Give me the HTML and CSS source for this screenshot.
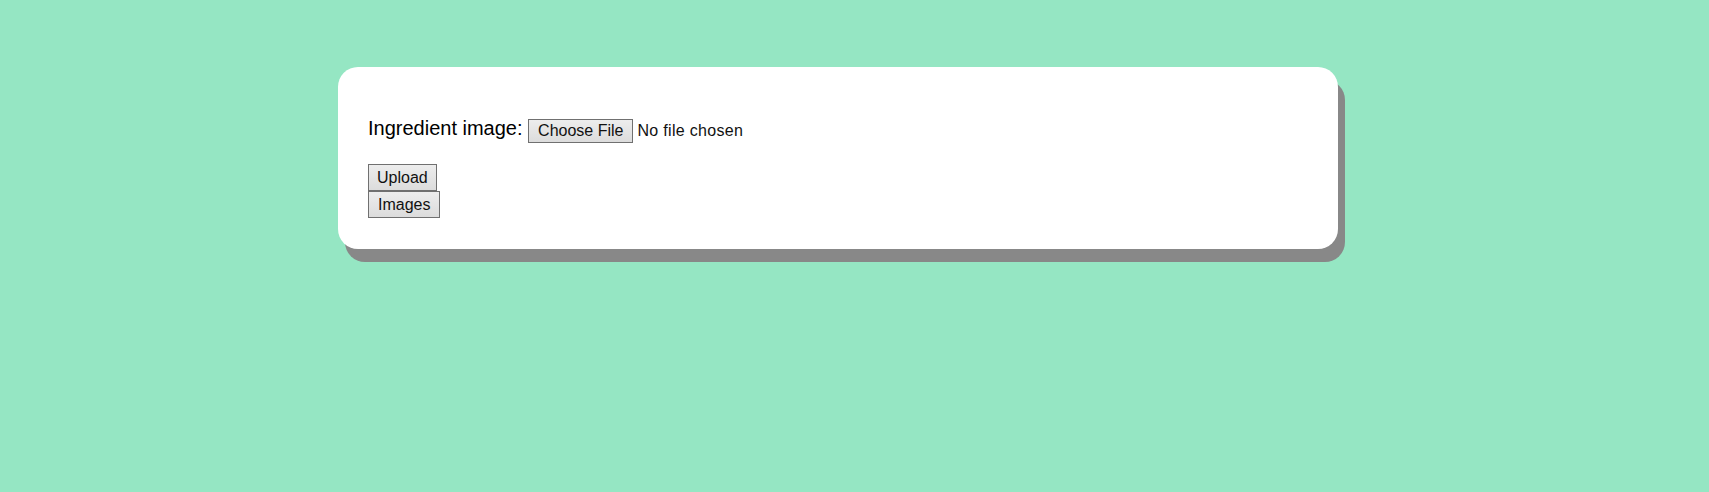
FILE: index.html
```html
<!DOCTYPE html>
<html lang="en">
<head>
<meta charset="utf-8">
<title>Ingredient upload</title>
<link rel="stylesheet" href="styles.css">
</head>
<body>
<div class="page">
  <main class="card">
    <form class="upload-form">
      <p class="field">
        <span class="field-label">Ingredient image:</span>
        <label class="btn file-btn">Choose File<input class="file-input" type="file" name="image"></label><span class="file-name">No file chosen</span>
      </p>
      <button class="btn block-btn" type="submit">Upload</button>
      <button class="btn block-btn" type="button">Images</button>
    </form>
  </main>
</div>
</body>
</html>
```
FILE: styles.css
```css
html, body {
  margin: 0;
  padding: 0;
  min-height: 100%;
}

html {
  height: 100%;
}

body {
  background: #95e6c3;
  font-family: "Liberation Sans", Arial, sans-serif;
  color: #000;
}

.page {
  box-sizing: border-box;
  min-height: 492px;
  padding: 67px 0 60px 338px;
}

.card {
  box-sizing: border-box;
  width: 1000px;
  background: #fff;
  border-radius: 20px;
  box-shadow: 7px 13px 0 #888888;
  padding: 30px 30px 31px 30px;
}

.upload-form {
  margin: 0;
}

.field {
  margin: 20px 0 22px 0;
  font-size: 20px;
  line-height: 23px;
}

.field-label {
  color: #000;
}

.btn {
  display: inline-block;
  font-family: "Liberation Sans", Arial, sans-serif;
  font-size: 16px;
  line-height: 18px;
  color: #111;
  background: linear-gradient(#ededed, #dcdcdc);
  border: 1px solid #707070;
  border-radius: 0;
  margin: 0;
  cursor: default;
}

.file-btn {
  padding: 2px 9px 2px 9px;
  vertical-align: baseline;
  position: relative;
  top: 1px;
}

.file-input {
  display: none;
}

.file-name {
  font-size: 16px;
  margin-left: 4px;
  letter-spacing: 0.3px;
  color: #111;
  position: relative;
  top: 1px;
}

.block-btn {
  display: block;
  padding: 4px 8px 3px 8px;
}

.block-btn + .block-btn {
  padding-left: 9px;
  padding-right: 9px;
}
```
